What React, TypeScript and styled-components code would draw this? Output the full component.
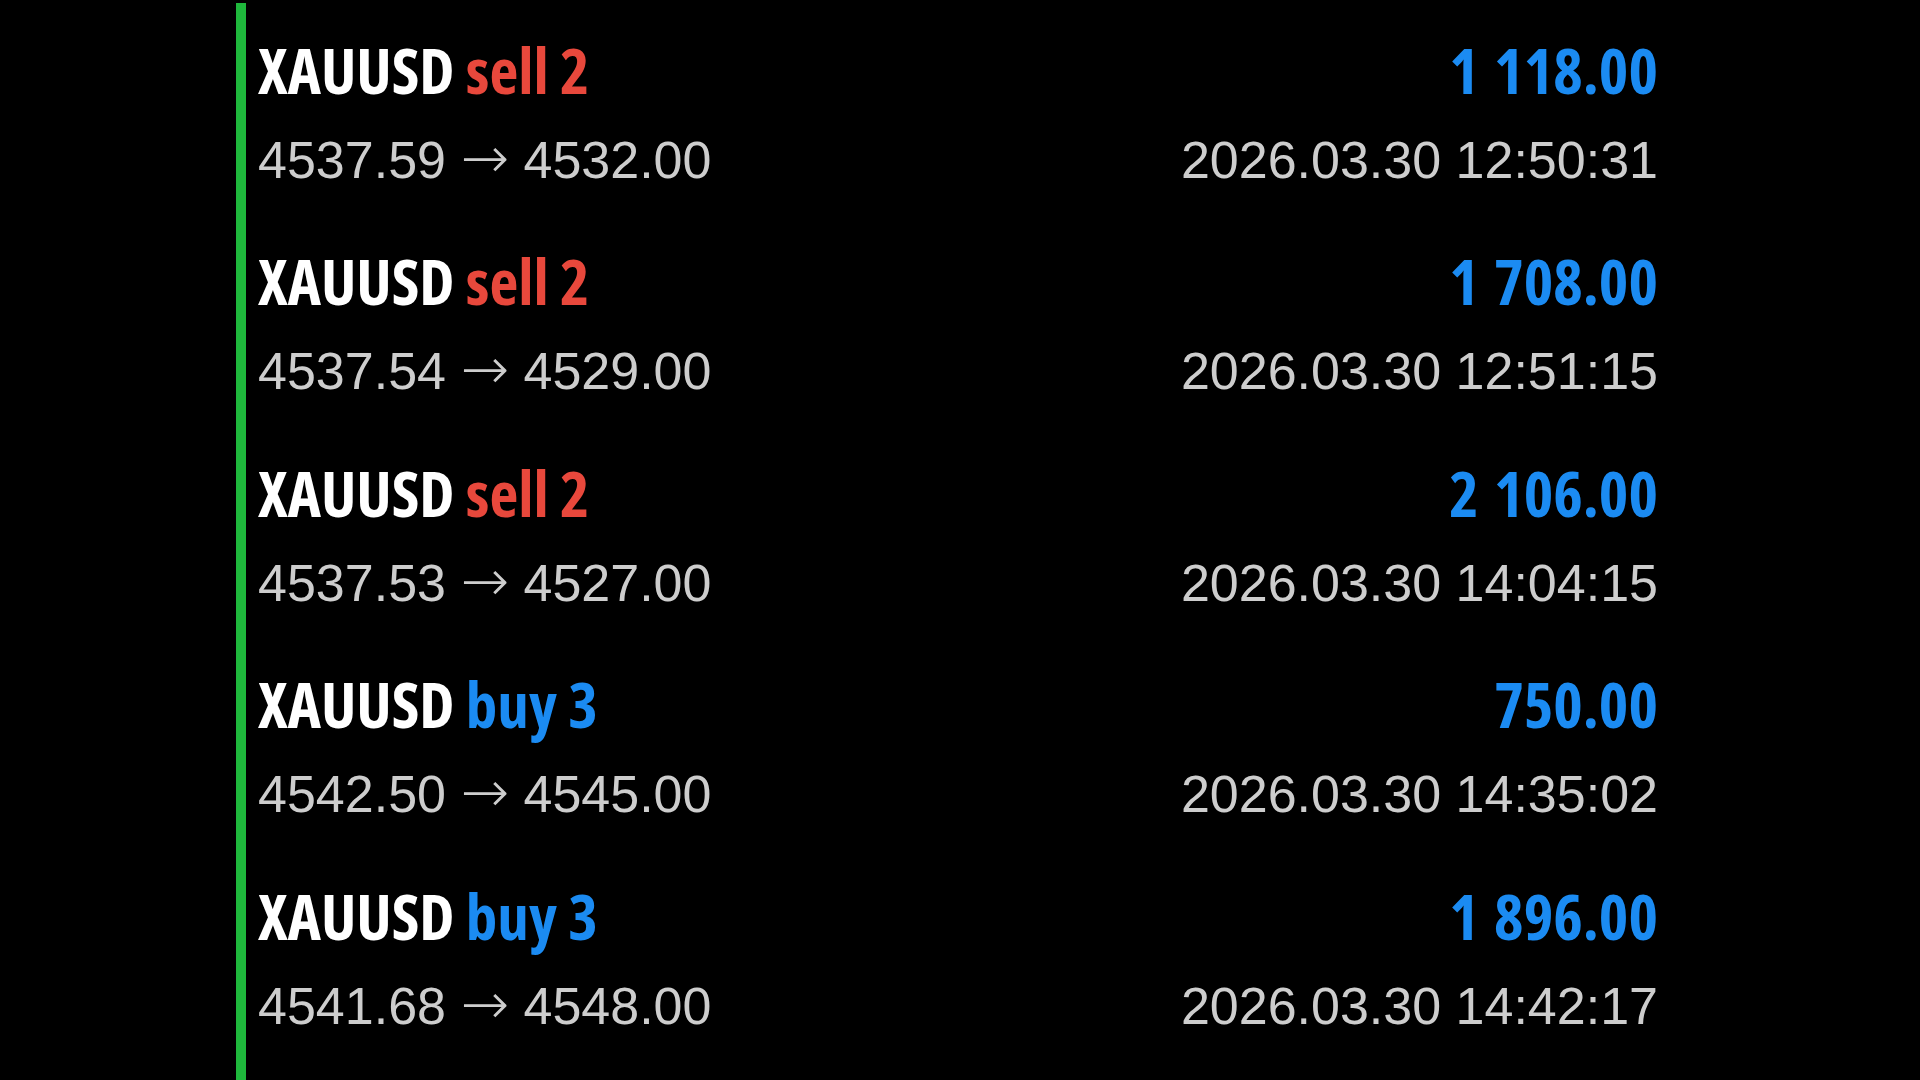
import React from "react";
import styled, { createGlobalStyle } from "styled-components";

const GlobalStyle = createGlobalStyle`
  html, body {
    margin: 0;
    padding: 0;
    background: #000;
  }
  body {
    overflow: hidden;
  }
`;

const Page = styled.div`
  width: 1920px;
  height: 1080px;
  background: #000;
  overflow: hidden;
  padding-top: 3px;
  box-sizing: border-box;
`;

const List = styled.div`
  margin-left: 236px;
  width: 1422px;
  height: 1077px;
  box-sizing: border-box;
  border-left: 10px solid #1fb83c;
  padding: 30.6px 0 0 12px;
  display: flex;
  flex-direction: column;
  gap: 55.5px;
`;

const Row = styled.div`
  display: flex;
  justify-content: space-between;
  align-items: stretch;
`;

const Col = styled.div<{ $align: "start" | "end" }>`
  display: flex;
  flex-direction: column;
  align-items: ${(p) => (p.$align === "end" ? "flex-end" : "flex-start")};
  gap: 24px;
`;

const Headline = styled.div`
  font-family: "Open Sans", "Roboto", sans-serif;
  font-stretch: 86%;
  font-weight: 700;
  font-size: 63px;
  line-height: 72px;
  height: 72px;
  white-space: nowrap;
  color: #ffffff;
`;

const Side = styled.span<{ $kind: "sell" | "buy" }>`
  color: ${(p) => (p.$kind === "sell" ? "#e8483c" : "#1b8bf2")};
`;

const Amount = styled(Headline)`
  color: #1b8bf2;
  word-spacing: 4px;
`;

const Detail = styled.div`
  font-family: "Liberation Sans", Arial, sans-serif;
  font-size: 52px;
  line-height: 60px;
  height: 60px;
  white-space: nowrap;
  color: #cdcdcd;
`;

const Arrow = styled.span`
  font-family: "DejaVu Sans", sans-serif;
  font-weight: 200;
  font-size: 58px;
  line-height: 0;
`;

type Trade = {
  side: "sell" | "buy";
  volume: number;
  open: string;
  close: string;
  profit: string;
  time: string;
};

const trades: Trade[] = [
  { side: "sell", volume: 2, open: "4537.59", close: "4532.00", profit: "1 118.00", time: "2026.03.30 12:50:31" },
  { side: "sell", volume: 2, open: "4537.54", close: "4529.00", profit: "1 708.00", time: "2026.03.30 12:51:15" },
  { side: "sell", volume: 2, open: "4537.53", close: "4527.00", profit: "2 106.00", time: "2026.03.30 14:04:15" },
  { side: "buy", volume: 3, open: "4542.50", close: "4545.00", profit: "750.00", time: "2026.03.30 14:35:02" },
  { side: "buy", volume: 3, open: "4541.68", close: "4548.00", profit: "1 896.00", time: "2026.03.30 14:42:17" },
];

export default function App() {
  return (
    <>
      <GlobalStyle />
      <Page>
        <List>
          {trades.map((t, i) => (
            <Row key={i}>
              <Col $align="start">
                <Headline>
                  XAUUSD <Side $kind={t.side}>{t.side} {t.volume}</Side>
                </Headline>
                <Detail>
                  {t.open} <Arrow>→</Arrow> {t.close}
                </Detail>
              </Col>
              <Col $align="end">
                <Amount>{t.profit}</Amount>
                <Detail>{t.time}</Detail>
              </Col>
            </Row>
          ))}
        </List>
      </Page>
    </>
  );
}
